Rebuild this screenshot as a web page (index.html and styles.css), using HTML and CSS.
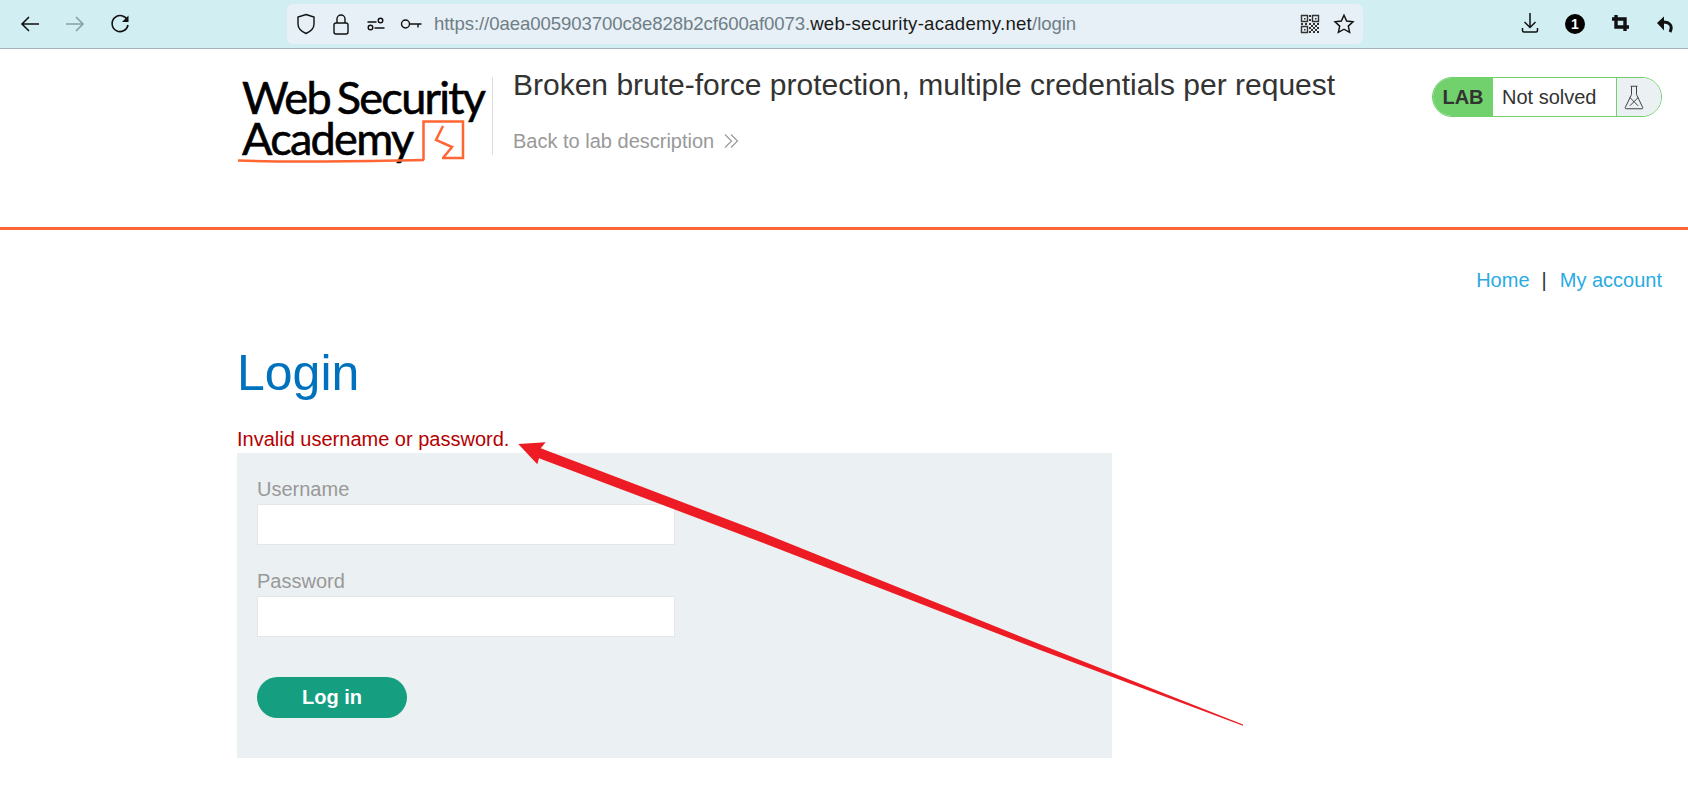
FILE: index.html
```html
<!DOCTYPE html>
<html lang="en">
<head>
    <meta charset="UTF-8">
    <meta name="viewport" content="width=device-width, initial-scale=1.0">
    <title>Login</title>
    <link rel="stylesheet" href="styles.css">
</head>
<body>
    <div class="toolbar">
        <div class="nav-group">
            <svg class="icon" viewBox="0 0 24 24"><path d="M21 12H4M11 5l-7 7 7 7"/></svg>
            <svg class="icon icon-off" viewBox="0 0 24 24"><path d="M3 12h17M13 5l7 7-7 7"/></svg>
            <svg class="icon" viewBox="0 0 24 24"><path d="M19.5 8.5A8 8 0 1 0 20 13"/><path class="solid" d="M20.5 3.5v6.5H14z"/></svg>
        </div>
        <div class="address-bar">
            <svg class="icon-sm" viewBox="0 0 22 22"><path d="M11 1.500l8 2.500v7c0 4.500-3.500 7.500-8 9.500-4.500-2-8-5-8-9.500V4z"/></svg>
            <svg class="icon-sm" viewBox="0 0 22 22"><rect x="4" y="10" width="14" height="11" rx="2"/><path d="M7 10V6a4 4 0 0 1 8 0v4"/></svg>
            <svg class="icon-sm" viewBox="0 0 22 22"><circle cx="15.500" cy="7.500" r="2.300"/><circle cx="5.500" cy="14.500" r="2.300"/><path d="M2.500 9h9M9.500 15h10"/></svg>
            <svg class="icon-sm" viewBox="0 0 22 22"><circle cx="5.500" cy="11" r="4"/><path d="M9.500 11h12M18 11v3.500"/></svg>
            <div class="url">https://0aea005903700c8e828b2cf600af0073.<span class="url-host">web-security-academy.net</span>/login</div>
            <svg class="icon-sm qr" viewBox="0 0 20 20">
                <path class="qr-line" d="M1.500 1.500h6v6h-6zM12.500 1.500h6v6h-6zM1.500 12.500h6v6h-6z"/>
                <path class="qr-dots" d="M4 4h1.500v1.500H4zM15 4h1.500v1.500H15zM4 15h1.500v1.500H4zM9 1h2v2H9zM9 5h2v2H9zM1 9h2v2H1zM5 9h2v2H5zM9 9h2v2H9zM13 9h2v2h-2zM17 9h2v2h-2zM9 13h2v2H9zM13 13h2v2h-2zM17 13h2v2h-2zM11 11h2v2h-2zM15 11h2v2h-2zM11 15h2v2h-2zM15 15h2v2h-2zM9 17h2v2H9zM13 17h2v2h-2zM17 17h2v2h-2z"/>
            </svg>
            <svg class="icon-star" viewBox="0 0 24 24"><path d="M12 2.500l2.900 6.300 6.900.8-5.100 4.700 1.400 6.800-6.100-3.400-6.100 3.400 1.400-6.800-5.100-4.700 6.900-.8z"/></svg>
        </div>
        <div class="tool-group">
            <svg class="icon-tool" viewBox="0 0 22 22"><path d="M11 0v14.500M5.500 9l5.500 5.500L16.500 9M3.500 15v2.500A1.500 1.500 0 0 0 5 19h12a1.500 1.500 0 0 0 1.500-1.500V15"/></svg>
            <div class="badge">1</div>
            <svg class="icon-tool icon-bold" viewBox="0 0 22 22"><path d="M7 2v12h13M3 6h13v12"/></svg>
            <svg class="icon-tool" viewBox="0 0 22 22"><path class="solid" d="M9 3.500v14L2 10z"/><path class="thick" d="M8 9c7 0 10 4 7 10"/></svg>
        </div>
    </div>

    <header class="lab-header">
        <div class="logo">
            <div class="logo-text">Web Security</div>
            <div class="logo-text">Academy</div>
            <svg class="logo-mark" viewBox="0 0 250 90">
                <path d="M1 83.500C60 86 130 84 187 83"/>
                <path d="M186.500 83V44.500H226V81H205"/>
                <path d="M206 49l-7 14 16 7-9 11"/>
            </svg>
        </div>
        <div class="lab-title">
            <h2>Broken brute-force protection, multiple credentials per request</h2>
            <a class="back-link" href="#">Back to lab description
                <svg class="chevrons" viewBox="0 0 16 16"><path d="M2 1.500L8.500 8 2 14.500M8 1.500L14.500 8 8 14.500"/></svg>
            </a>
        </div>
        <div class="lab-status">
            <span class="lab-tag">LAB</span>
            <span class="lab-state">Not solved</span>
            <span class="lab-flask">
                <svg viewBox="0 0 24 30"><path d="M8 1.500h8M9 1.500v10L1.500 27a1 1 0 0 0 1 1.500h19a1 1 0 0 0 1-1.500L15 11.500v-10"/><path d="M7 15l10 10M17 15L7 25"/></svg>
            </span>
        </div>
    </header>

    <main class="page">
        <nav class="top-links"><a href="#">Home</a><span class="divider">|</span><a href="#">My account</a></nav>
        <h1>Login</h1>
        <p class="error">Invalid username or password.</p>
        <form class="login-form">
            <label for="username">Username</label>
            <input id="username" type="text">
            <label for="password">Password</label>
            <input id="password" type="password">
            <button type="button">Log in</button>
        </form>
    </main>

    <svg class="arrow" viewBox="0 0 1688 802"><path d="M518.300 444L545.700 442.300 540.700 448.300 760 531.700 1040 644.300 1243 724.500 1243 725.800 1040 650 760 541.700 539 458.300 537.300 464.300z"/></svg>
</body>
</html>
```

FILE: styles.css
```css
html, body{
    margin: 0;
    height: 100%;
}
body{
    position: relative;
    overflow: hidden;
    background: #fff;
    font-family: "Liberation Sans", Arial, sans-serif;
    color: #333332;
}
svg{
    display: block;
    fill: none;
    stroke: #111;
}
.solid{
    fill: #111;
    stroke: none;
}

/* browser bar */
.toolbar{
    height: 48px;
    display: flex;
    align-items: center;
    background: #d1eff3;
    border-bottom: 1px solid #a3b4b9;
}
.nav-group{
    display: flex;
    gap: 21px;
    width: 287px;
    padding-left: 18px;
    box-sizing: border-box;
}
.icon{
    width: 24px;
    height: 24px;
    stroke-width: 1.6;
}
.icon-off{
    stroke: #8b9ea3;
}
.address-bar{
    width: 1076px;
    height: 40px;
    box-sizing: border-box;
    padding: 0 8px;
    display: flex;
    align-items: center;
    gap: 13px;
    background: #e7f0f6;
    border-radius: 6px;
}
.icon-sm{
    width: 22px;
    height: 22px;
    stroke-width: 1.4;
    flex: none;
}
.url{
    flex: 1;
    margin-left: -1px;
    font-size: 18.6px;
    letter-spacing: -0.08px;
    color: #6f7e86;
    white-space: nowrap;
}
.url-host{
    letter-spacing: 0.26px;
    color: #1a1a1a;
}
.qr{
    width: 20px;
    height: 20px;
}
.qr-line{
    stroke: #333;
    stroke-width: 1.4;
}
.qr-dots{
    fill: #333;
    stroke: none;
}
.icon-star{
    width: 22px;
    height: 22px;
    stroke-width: 1.6;
    flex: none;
}
.tool-group{
    display: flex;
    align-items: center;
    gap: 24px;
    margin-left: 156px;
}
.icon-tool{
    width: 22px;
    height: 22px;
    stroke-width: 1.5;
    overflow: visible;
}
.icon-bold{
    stroke-width: 3.4;
}
.thick{
    stroke-width: 3;
}
.badge{
    width: 20px;
    height: 20px;
    border-radius: 50%;
    background: #000;
    color: #fff;
    font-size: 14px;
    font-weight: bold;
    line-height: 20px;
    text-align: center;
}

/* lab header */
.lab-header{
    height: 181px;
    box-sizing: border-box;
    padding: 20px 26px 0 237px;
    display: flex;
    align-items: flex-start;
    border-bottom: 3px solid #ff6633;
}
.logo{
    position: relative;
    width: 255px;
    height: 78px;
    margin-top: 8px;
    flex: none;
    border-right: 1px solid #dcdcdc;
}
.logo-text{
    height: 41px;
    margin-left: 5px;
    font-family: Lato, sans-serif;
    font-size: 45px;
    line-height: 41px;
    letter-spacing: -1.7px;
    word-spacing: -3px;
    -webkit-text-stroke: 0.6px #000;
    color: #000;
    white-space: nowrap;
}
.logo-mark{
    position: absolute;
    left: 0;
    top: 0;
    width: 250px;
    height: 90px;
    stroke: #ff6633;
    stroke-width: 2.5;
    overflow: visible;
}
.lab-title{
    flex: 1;
    padding-left: 20px;
}
.lab-title h2{
    margin: 0;
    font-size: 30px;
    font-weight: normal;
    line-height: 32px;
    color: #333332;
}
.back-link{
    display: flex;
    align-items: center;
    gap: 9px;
    margin-top: 28px;
    font-size: 20px;
    line-height: 24px;
    color: #999;
    text-decoration: none;
}
.chevrons{
    width: 16px;
    height: 16px;
    stroke: #999;
    stroke-width: 1.2;
}
.lab-status{
    margin-top: 8px;
    width: 230px;
    height: 40px;
    box-sizing: border-box;
    display: flex;
    border: 1px solid #70d16d;
    border-radius: 20px;
    overflow: hidden;
    font-size: 20px;
    line-height: 38px;
}
.lab-tag{
    width: 60px;
    background: #70d16d;
    font-weight: bold;
    text-align: center;
}
.lab-state{
    flex: 1;
    padding-left: 9px;
    border-right: 1px solid #70d16d;
    background: #fff;
}
.lab-flask{
    width: 44px;
    background: #ebf0f2;
    display: flex;
    padding: 7px 0 0 7px;
    box-sizing: border-box;
}
.lab-flask svg{
    width: 20px;
    height: 25px;
    stroke: #333;
    stroke-width: 1.1;
}

/* page content */
.page{
    padding: 0 26px 0 237px;
}
.top-links{
    display: flex;
    justify-content: flex-end;
    padding-top: 38px;
    font-size: 20px;
    line-height: 24px;
}
.top-links a{
    color: #29abe2;
    text-decoration: none;
}
.divider{
    margin: 0 13px 0 12px;
    color: #333332;
}
h1{
    margin: 51px 0 0;
    font-size: 50px;
    font-weight: normal;
    line-height: 60px;
    color: #0071bc;
}
.error{
    margin: 24px 0 0;
    font-size: 20px;
    line-height: 24px;
    color: #b50000;
}
.login-form{
    width: 875px;
    height: 305px;
    box-sizing: border-box;
    margin-top: 2px;
    padding: 22px 20px 0;
    background: #ebf0f2;
    display: flex;
    flex-direction: column;
    align-items: flex-start;
}
.login-form label{
    margin-bottom: 1px;
    font-size: 20px;
    line-height: 28px;
    color: #999;
}
.login-form input{
    width: 418px;
    height: 41px;
    box-sizing: border-box;
    margin: 0 0 22px;
    background: #fff;
    border: 1px solid #e6e6e6;
    outline: none;
}
.login-form button{
    width: 150px;
    height: 41px;
    margin-top: 18px;
    border: none;
    border-radius: 21px;
    background: #159e7f;
    color: #fff;
    font-family: inherit;
    font-size: 20px;
    font-weight: bold;
}

/* screenshot annotation */
.arrow{
    position: absolute;
    left: 0;
    top: 0;
    width: 1688px;
    height: 802px;
    pointer-events: none;
}
.arrow path{
    fill: #ed1c24;
    stroke: none;
}
```
